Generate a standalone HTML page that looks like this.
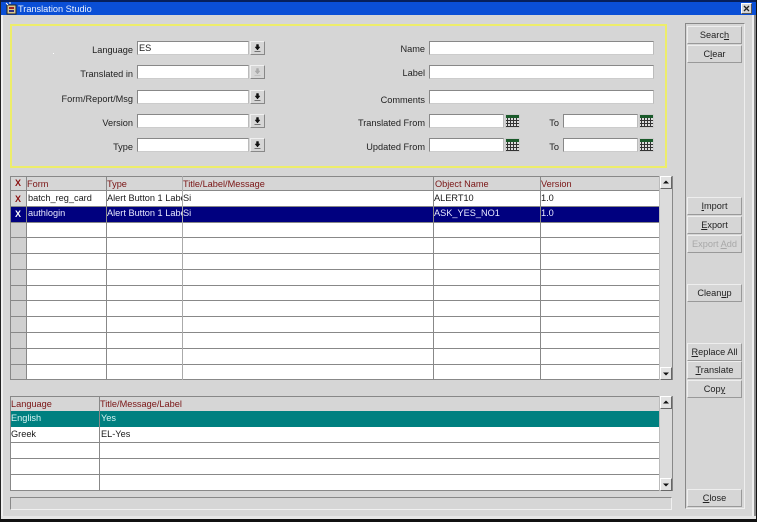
<!DOCTYPE html>
<html><head><meta charset="utf-8"><style>
html,body{margin:0;padding:0;background:#000}
#w{position:relative;width:757px;height:522px;overflow:hidden;background:#d6d6d6;font:9.2px "Liberation Sans",Arial,sans-serif;color:#1a1a1a}
#w div{position:absolute;box-sizing:border-box;white-space:nowrap}
.l{text-align:right;line-height:12px;height:12px;color:#222}
.i{background:#fff;border:1px solid;border-color:#888 #bbb #ccc #888;height:14px;line-height:12px;padding-left:1px}
.b{width:15px;height:14px;background:#d6d6d6;border:1px solid;border-color:#f0f0f0 #888 #888 #f0f0f0}
.b svg,.c svg,.s svg{position:absolute;left:0;top:0}
.c{width:15px;height:14px;background:#ccc}
.p{background:#d6d6d6;border:1px solid;border-color:#eee #999 #999 #eee;text-align:center;line-height:17px;width:55px;height:18px;left:687px;color:#222}
.h{background:#d6d6d6;color:#7a1515;line-height:13px;height:13px}
.t{line-height:14px;height:15px}
.hl{background:#888;height:1px}
.vl{background:#888;width:1px}
.s{width:12px;height:13px;left:660px;background:#e2e2e2;border:1px solid;border-color:#fff #666 #666 #fff}
.x{font-weight:bold;color:#8a1010;width:16px;text-align:center;left:10px;font-size:9px}
u{text-decoration:underline}
</style></head><body><div id="w">
<!-- window frame -->
<div style="left:0;top:0;width:757px;height:2px;background:#06205c"></div>
<div style="left:1px;top:2px;width:755px;height:13px;background:#0a4fd6"></div>
<div style="left:0;top:0;width:1px;height:522px;background:#222"></div>
<div style="left:1px;top:15px;width:2px;height:504px;background:#efefef"></div>
<div style="left:756px;top:0;width:1px;height:522px;background:#111"></div>
<div style="left:752px;top:15px;width:2px;height:504px;background:#efefef"></div>
<div style="left:754px;top:15px;width:2px;height:504px;background:#8a8a8a"></div>
<div style="left:0;top:519px;width:757px;height:3px;background:#111"></div>
<div style="left:1px;top:516px;width:755px;height:3px;background:#e6e6e6"></div>
<!-- title -->
<svg style="position:absolute;left:5px;top:2px" width="12" height="13" viewBox="0 0 12 13"><rect x="2" y="3" width="9" height="9" fill="#d8c890" stroke="#222"/><rect x="4" y="5" width="5" height="2" fill="#a02020"/><rect x="4" y="8" width="5" height="2" fill="#303080"/><path d="M1 1l2 2M5 0v2" stroke="#fff"/></svg>
<div style="left:18px;top:2px;color:#e8f0ff;line-height:14px;height:13px">Translation Studio</div>
<div style="left:741px;top:3px;width:11px;height:11px;background:#d6d6d6;border:1px solid;border-color:#fff #555 #555 #fff"><svg width="9" height="9" style="position:absolute;left:0;top:0"><path d="M2 2l5 5M7 2l-5 5" stroke="#222" stroke-width="1.3"/></svg></div>

<!-- yellow box -->
<div style="left:10px;top:24px;width:657px;height:144px;border:2px solid #eded6a"></div>
<div style="left:53px;top:53px;width:1px;height:1px;background:#fff"></div>

<div class="l" style="left:20px;top:44px;width:113px">Language</div>
<div class="l" style="left:20px;top:68px;width:113px">Translated in</div>
<div class="l" style="left:20px;top:93px;width:113px">Form/Report/Msg</div>
<div class="l" style="left:20px;top:117px;width:113px">Version</div>
<div class="l" style="left:20px;top:141px;width:113px">Type</div>

<div class="i" style="left:137px;top:41px;width:112px">ES</div>
<div class="i" style="left:137px;top:65px;width:112px"></div>
<div class="i" style="left:137px;top:90px;width:112px"></div>
<div class="i" style="left:137px;top:114px;width:112px"></div>
<div class="i" style="left:137px;top:138px;width:112px"></div>

<div class="b" style="left:250px;top:41px"><svg width="13" height="12"><path d="M5.500 2.500h2v2.500h1.500l-2.500 3-2.500-3h1.500zM3.500 9.500h6" fill="#111" stroke="#111" stroke-width=".5"/></svg></div>
<div class="b" style="left:250px;top:65px"><svg width="13" height="12"><path d="M5.500 2.500h2v2.500h1.500l-2.500 3-2.500-3h1.500zM3.500 9.500h6" fill="#aaa" stroke="#aaa" stroke-width=".5"/></svg></div>
<div class="b" style="left:250px;top:90px"><svg width="13" height="12"><path d="M5.500 2.500h2v2.500h1.500l-2.500 3-2.500-3h1.500zM3.500 9.500h6" fill="#111" stroke="#111" stroke-width=".5"/></svg></div>
<div class="b" style="left:250px;top:114px"><svg width="13" height="12"><path d="M5.500 2.500h2v2.500h1.500l-2.500 3-2.500-3h1.500zM3.500 9.500h6" fill="#111" stroke="#111" stroke-width=".5"/></svg></div>
<div class="b" style="left:250px;top:138px"><svg width="13" height="12"><path d="M5.500 2.500h2v2.500h1.500l-2.500 3-2.500-3h1.500zM3.500 9.500h6" fill="#111" stroke="#111" stroke-width=".5"/></svg></div>

<div class="l" style="left:320px;top:43px;width:105px">Name</div>
<div class="l" style="left:320px;top:67px;width:105px">Label</div>
<div class="l" style="left:320px;top:94px;width:105px">Comments</div>
<div class="l" style="left:320px;top:117px;width:105px">Translated From</div>
<div class="l" style="left:320px;top:141px;width:105px">Updated From</div>
<div class="l" style="left:539px;top:117px;width:20px">To</div>
<div class="l" style="left:539px;top:141px;width:20px">To</div>

<div class="i" style="left:429px;top:41px;width:225px"></div>
<div class="i" style="left:429px;top:65px;width:225px"></div>
<div class="i" style="left:429px;top:90px;width:225px"></div>
<div class="i" style="left:429px;top:114px;width:75px"></div>
<div class="i" style="left:429px;top:138px;width:75px"></div>
<div class="i" style="left:563px;top:114px;width:75px"></div>
<div class="i" style="left:563px;top:138px;width:75px"></div>

<div class="c" style="left:505px;top:114px"><svg width="15" height="14"><rect x="1" y="1" width="13" height="3" fill="#1a5a2a"/><rect x="1" y="4" width="13" height="9" fill="#ddd"/><path d="M2.500 4v9M5.500 4v9M8.500 4v9M11.500 4v9M1 6.500h13M1 9.500h13M1 12.500h13" stroke="#333" fill="none"/></svg></div>
<div class="c" style="left:505px;top:138px"><svg width="15" height="14"><rect x="1" y="1" width="13" height="3" fill="#1a5a2a"/><rect x="1" y="4" width="13" height="9" fill="#ddd"/><path d="M2.500 4v9M5.500 4v9M8.500 4v9M11.500 4v9M1 6.500h13M1 9.500h13M1 12.500h13" stroke="#333" fill="none"/></svg></div>
<div class="c" style="left:639px;top:114px"><svg width="15" height="14"><rect x="1" y="1" width="13" height="3" fill="#1a5a2a"/><rect x="1" y="4" width="13" height="9" fill="#ddd"/><path d="M2.500 4v9M5.500 4v9M8.500 4v9M11.500 4v9M1 6.500h13M1 9.500h13M1 12.500h13" stroke="#333" fill="none"/></svg></div>
<div class="c" style="left:639px;top:138px"><svg width="15" height="14"><rect x="1" y="1" width="13" height="3" fill="#1a5a2a"/><rect x="1" y="4" width="13" height="9" fill="#ddd"/><path d="M2.500 4v9M5.500 4v9M8.500 4v9M11.500 4v9M1 6.500h13M1 9.500h13M1 12.500h13" stroke="#333" fill="none"/></svg></div>

<!-- right panel -->
<div style="left:685px;top:23px;width:60px;height:486px;border:1px solid;border-color:#888 #eee #eee #888"></div>
<div class="p" style="top:26px">Searc<u>h</u></div>
<div class="p" style="top:45px">C<u>l</u>ear</div>
<div class="p" style="top:197px"><u>I</u>mport</div>
<div class="p" style="top:216px"><u>E</u>xport</div>
<div class="p" style="top:235px;color:#a8a8a8">Export <u>A</u>dd</div>
<div class="p" style="top:284px">Clean<u>u</u>p</div>
<div class="p" style="top:343px"><u>R</u>eplace All</div>
<div class="p" style="top:361px"><u>T</u>ranslate</div>
<div class="p" style="top:380px">Cop<u>y</u></div>
<div class="p" style="top:489px"><u>C</u>lose</div>

<!-- grid 1 -->
<div style="left:26px;top:190px;width:633px;height:190px;background:#fff"></div>
<div style="left:10px;top:222px;width:16px;height:158px;background:#d0d0d0"></div>
<div style="left:10px;top:190px;width:16px;height:32px;background:#d6d6d6"></div>
<div style="left:10px;top:207px;width:649px;height:15px;background:#00007f"></div>
<div class="hl" style="left:10px;top:176px;width:650px"></div>
<div class="hl" style="left:10px;top:190px;width:650px"></div>
<div class="hl" style="left:10px;top:206px;width:650px"></div>
<div class="hl" style="left:10px;top:222px;width:650px"></div>
<div class="hl" style="left:10px;top:237px;width:650px"></div>
<div class="hl" style="left:10px;top:253px;width:650px"></div>
<div class="hl" style="left:10px;top:269px;width:650px"></div>
<div class="hl" style="left:10px;top:285px;width:650px"></div>
<div class="hl" style="left:10px;top:300px;width:650px"></div>
<div class="hl" style="left:10px;top:316px;width:650px"></div>
<div class="hl" style="left:10px;top:332px;width:650px"></div>
<div class="hl" style="left:10px;top:348px;width:650px"></div>
<div class="hl" style="left:10px;top:364px;width:650px"></div>
<div class="hl" style="left:10px;top:379px;width:650px"></div>
<div class="vl" style="left:10px;top:176px;height:204px"></div>
<div class="vl" style="left:26px;top:176px;height:204px"></div>
<div class="vl" style="left:106px;top:176px;height:204px"></div>
<div class="vl" style="left:182px;top:176px;height:204px;background:#aaa"></div>
<div class="vl" style="left:433px;top:176px;height:204px"></div>
<div class="vl" style="left:540px;top:176px;height:204px"></div>
<div class="vl" style="left:659px;top:176px;height:204px;background:#bbb"></div>

<div class="x" style="top:177px;line-height:13px;height:13px">X</div>
<div class="x" style="top:192px;line-height:14px;height:14px">X</div>
<div class="x" style="top:207px;line-height:14px;height:14px;color:#fff">X</div>
<div class="h" style="left:27px;top:177px;width:78px;line-height:14px">Form</div>
<div class="h" style="left:107px;top:177px;width:74px;line-height:14px">Type</div>
<div class="h" style="left:183px;top:177px;width:249px;line-height:14px">Title/Label/Message</div>
<div class="h" style="left:435px;top:177px;width:104px;line-height:14px">Object Name</div>
<div class="h" style="left:541px;top:177px;width:117px;line-height:14px">Version</div>

<div class="t" style="left:28px;top:191px">batch_reg_card</div>
<div class="t" style="left:107px;top:191px;width:75px;overflow:hidden">Alert Button 1 Label</div>
<div class="t" style="left:183px;top:191px">Si</div>
<div class="t" style="left:434px;top:191px">ALERT10</div>
<div class="t" style="left:541px;top:191px">1.0</div>
<div class="t" style="left:28px;top:206px;color:#e8e8ff">authlogin</div>
<div class="t" style="left:107px;top:206px;width:75px;overflow:hidden;color:#e8e8ff">Alert Button 1 Label</div>
<div class="t" style="left:183px;top:206px;color:#e8e8ff">Si</div>
<div class="t" style="left:434px;top:206px;color:#e8e8ff">ASK_YES_NO1</div>
<div class="t" style="left:541px;top:206px;color:#e8e8ff">1.0</div>

<!-- scrollbars -->
<div style="left:660px;top:176px;width:13px;height:204px;background:#dcdcdc;border-right:1px solid #888"></div>
<div class="s" style="top:176px"><svg width="10" height="11"><path d="M5 3.500l3 3H2z" fill="#111"/></svg></div>
<div class="s" style="top:367px"><svg width="10" height="11"><path d="M5 7.500L2 4.500h6z" fill="#111"/></svg></div>

<!-- grid 2 -->
<div style="left:10px;top:411px;width:649px;height:79px;background:#fff"></div>
<div style="left:10px;top:411px;width:649px;height:16px;background:#008080"></div>
<div class="hl" style="left:10px;top:396px;width:650px"></div>
<div class="hl" style="left:10px;top:442px;width:650px"></div>
<div class="hl" style="left:10px;top:458px;width:650px"></div>
<div class="hl" style="left:10px;top:474px;width:650px"></div>
<div class="hl" style="left:10px;top:490px;width:650px"></div>
<div class="vl" style="left:10px;top:396px;height:95px"></div>
<div class="vl" style="left:99px;top:396px;height:95px"></div>
<div class="vl" style="left:659px;top:396px;height:95px;background:#bbb"></div>
<div class="h" style="left:11px;top:397px;width:88px;line-height:14px">Language</div>
<div class="h" style="left:100px;top:397px;width:300px;line-height:14px">Title/Message/Label</div>
<div class="t" style="left:11px;top:411px;color:#d8f4f4">English</div>
<div class="t" style="left:101px;top:411px;color:#d8f4f4">Yes</div>
<div class="t" style="left:11px;top:427px">Greek</div>
<div class="t" style="left:101px;top:427px">EL-Yes</div>

<div style="left:660px;top:396px;width:13px;height:95px;background:#dcdcdc;border-right:1px solid #888"></div>
<div class="s" style="top:396px"><svg width="10" height="11"><path d="M5 3.500l3 3H2z" fill="#111"/></svg></div>
<div class="s" style="top:478px"><svg width="10" height="11"><path d="M5 7.500L2 4.500h6z" fill="#111"/></svg></div>

<!-- status -->
<div style="left:10px;top:497px;width:662px;height:13px;background:#d6d6d6;border:1px solid;border-color:#888 #f0f0f0 #f0f0f0 #888"></div>
</div></body></html>
